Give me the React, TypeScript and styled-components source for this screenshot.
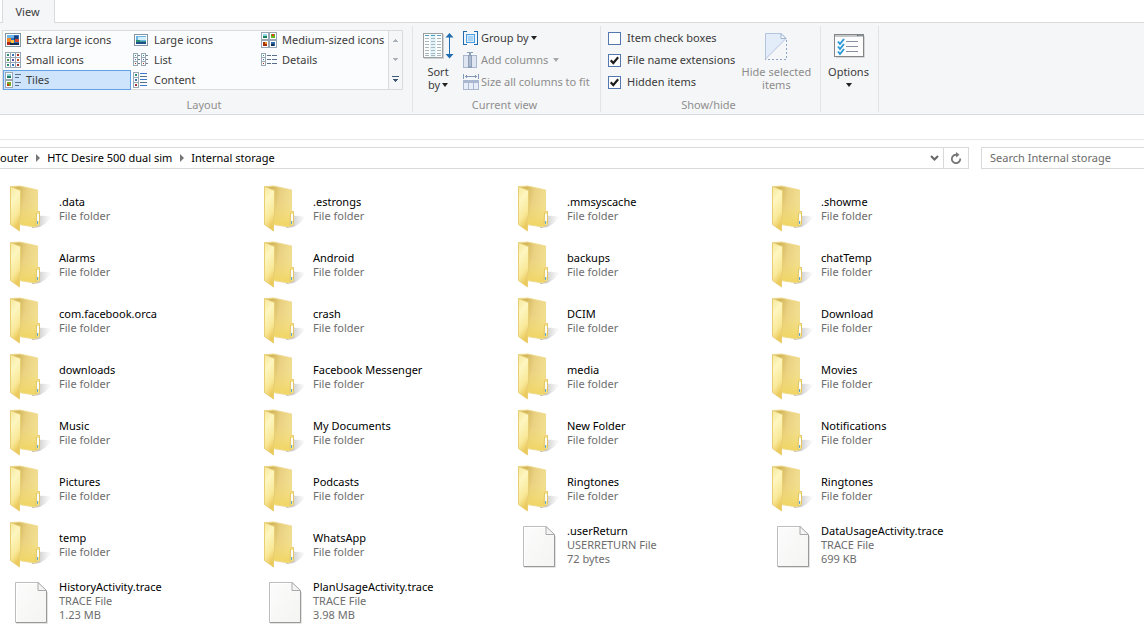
import React, { ReactNode, useState } from "react";
import styled, { createGlobalStyle } from "styled-components";

const GlobalStyle = createGlobalStyle`
  *, *::before, *::after { box-sizing: border-box; }
  body {
    margin: 0;
    background: #fff;
    color: #000;
    font: 11px/14px "Noto Sans", "Open Sans", sans-serif;
  }
  button, input { font: inherit; }
`;

/* ---------- Ribbon ---------- */

const TabStrip = styled.nav`
  display: flex;
  height: 23px;
  padding-left: 2px;
  border-bottom: 1px solid #dadbdc;
`;

const Tab = styled.button`
  height: 23px;
  width: 53px;
  padding: 0 2px 0 0;
  border: solid #dadbdc;
  border-width: 0 1px;
  background: #f5f6f7;
  color: #3b3b3b;
`;

const Ribbon = styled.div`
  display: flex;
  height: 92px;
  padding: 3px 0 2px;
  background: #f5f6f7;
  border-bottom: 1px solid #dadbdc;
`;

const Group = styled.section<{ $width: number }>`
  display: flex;
  flex-direction: column;
  justify-content: space-between;
  flex: none;
  width: ${(p) => p.$width}px;
  border-right: 1px solid #e2e3e4;
`;

const GroupBody = styled.div<{ $left?: number }>`
  display: flex;
  padding-left: ${(p) => p.$left ?? 0}px;
`;

const GroupTitle = styled.h2`
  margin: 0;
  padding-right: 4px;
  font-size: 11px;
  line-height: 14px;
  font-weight: 400;
  text-align: center;
  color: #8f8f8f;
`;

const Gallery = styled.div`
  display: flex;
  width: 401px;
  height: 60px;
  margin: 4px 0 0 2px;
  border: 1px solid #dadbdc;
  background: #fbfcfd;
`;

const GalleryGrid = styled.div`
  flex: 1;
  display: grid;
  grid-template-columns: repeat(3, 128px);
  grid-auto-rows: 20px;
  margin-top: -1px;
`;

const GalleryItem = styled.button<{ $selected?: boolean }>`
  display: flex;
  align-items: center;
  gap: 5px;
  padding: 0 1px;
  border: 1px solid ${(p) => (p.$selected ? "#62a2e4" : "transparent")};
  background: ${(p) => (p.$selected ? "#cde4fc" : "transparent")};
  color: #3b3b3b;
  white-space: nowrap;
`;

const GalleryScroll = styled.div`
  display: flex;
  flex-direction: column;
  width: 14px;
  border-left: 1px solid #dadbdc;
  background: #f5f6f7;
`;

const ScrollButton = styled.button`
  flex: 1;
  display: grid;
  place-items: center;
  padding: 0;
  border: 0;
  background: transparent;
`;

const BigButton = styled.button<{ $width: number; $muted?: boolean }>`
  display: flex;
  flex-direction: column;
  align-items: center;
  gap: 2px;
  flex: none;
  width: ${(p) => p.$width}px;
  padding: 7px 0 0;
  border: 0;
  background: transparent;
  color: ${(p) => (p.$muted ? "#8d8d8d" : "#3b3b3b")};
  line-height: 13px;
`;

const Stack = styled.div<{ $left?: number }>`
  display: flex;
  flex-direction: column;
  padding: 1px 0 0 ${(p) => p.$left ?? 0}px;
`;

const SmallButton = styled.button<{ $muted?: boolean }>`
  display: flex;
  align-items: center;
  gap: 2px;
  height: 22px;
  padding: 0;
  border: 0;
  background: transparent;
  color: ${(p) => (p.$muted ? "#8d8d8d" : "#3b3b3b")};
  white-space: nowrap;
`;

const CheckLabel = styled.label`
  display: flex;
  align-items: center;
  gap: 6px;
  height: 22px;
  color: #3b3b3b;
  white-space: nowrap;
`;

const CheckBox = styled.span`
  display: grid;
  place-items: center;
  > * { grid-area: 1 / 1; }
  > svg { visibility: hidden; pointer-events: none; }
  > input:checked + svg { visibility: visible; }
`;

const CheckInput = styled.input`
  appearance: none;
  width: 13px;
  height: 13px;
  margin: 0;
  border: 1px solid #5577b0;
  background: #fff;
`;

const Caret = styled.span<{ $muted?: boolean }>`
  display: inline-block;
  vertical-align: 2px;
  margin-left: 2px;
  border: solid transparent;
  border-width: 4px 3px 0;
  border-top-color: ${(p) => (p.$muted ? "#a9a9a9" : "#222")};
`;

/* ---------- Address row ---------- */

const AddressRow = styled.div`
  display: flex;
  gap: 12px;
  margin-top: 24px;
  padding-top: 7px;
  border-top: 1px solid #e8e8e8;
`;

const AddressBar = styled.div`
  flex: 1;
  display: flex;
  align-items: center;
  height: 22px;
  border: 1px solid #d9d9d9;
  border-left: 0;
`;

const Crumb = styled.a`
  color: #000;
  text-decoration: none;
  white-space: nowrap;
`;

const CrumbArrow = styled.span`
  margin: 0 7px 0 8px;
  border: solid transparent;
  border-width: 4px 0 4px 4px;
  border-left-color: #777;
`;

const BarButton = styled.button<{ $divided?: boolean }>`
  display: grid;
  place-items: center;
  width: ${(p) => (p.$divided ? 25 : 18)}px;
  height: 20px;
  padding: 0;
  border: 0 solid #d9d9d9;
  border-left-width: ${(p) => (p.$divided ? 1 : 0)}px;
  background: transparent;
`;

const Spacer = styled.span`
  flex: 1;
`;

const Search = styled.input`
  flex: none;
  width: 163px;
  height: 22px;
  padding: 0 8px 2px;
  border: 1px solid #d9d9d9;
  border-right: 0;
  border-radius: 0;
  background: #fff;
  &::placeholder { color: #6a6a6a; opacity: 1; }
`;

/* ---------- Files ---------- */

const FileGrid = styled.ul`
  display: grid;
  grid-template-columns: repeat(auto-fill, 254px);
  grid-auto-rows: 56px;
  margin: 0;
  padding: 12px 0 0 2px;
  list-style: none;
`;

const Tile = styled.li`
  display: flex;
  align-items: center;
  gap: 5px;
  padding-left: 4px;
  white-space: nowrap;
`;

const TileName = styled.div`
  color: #000;
`;

const TileMeta = styled.div`
  color: #6d6d6d;
`;

/* ---------- Icons ---------- */

const Px = ({ children, w = 16, h = 16 }: { children: ReactNode; w?: number; h?: number }) => (
  <svg width={w} height={h} viewBox={`0 0 ${w} ${h}`} shapeRendering="crispEdges" aria-hidden="true">
    {children}
  </svg>
);

const Cell = ({ x, y, s, dot }: { x: number; y: number; s: number; dot: string }) => (
  <g>
    <rect x={x} y={y} width={s} height={s} fill="#9aa7b4" />
    <rect x={x + 1} y={y + 1} width={s - 2} height={s - 2} fill="#fff" />
    <rect x={x + 2} y={y + 2} width={s - 4} height={s - 4} fill={dot} />
  </g>
);

const ExtraLargeIcon = () => (
  <Px>
    <rect x="0" y="1" width="16" height="14" fill="#8495a6" />
    <rect x="1" y="2" width="14" height="12" fill="#fff" />
    <rect x="2" y="3" width="12" height="10" fill="#2f6fbd" />
    <rect x="2" y="3" width="7" height="3" fill="#6db7ee" />
    <rect x="2" y="6" width="4" height="4" fill="#f08a24" />
    <rect x="6" y="8" width="3" height="3" fill="#f7c33c" />
    <rect x="9" y="4" width="4" height="4" fill="#1c3f79" />
    <rect x="10" y="7" width="4" height="3" fill="#d8472b" />
    <rect x="2" y="10" width="3" height="3" fill="#b3261e" />
    <rect x="5" y="11" width="9" height="2" fill="#182b52" />
  </Px>
);

const LargeIcon = () => (
  <Px>
    <rect x="1" y="2" width="14" height="12" fill="#8495a6" />
    <rect x="2" y="3" width="12" height="10" fill="#fff" />
    <rect x="3" y="4" width="10" height="8" fill="#6ab4e8" />
    <rect x="5" y="5" width="8" height="3" fill="#d5effb" />
    <rect x="3" y="8" width="4" height="2" fill="#2b8f72" />
    <rect x="7" y="9" width="6" height="1" fill="#3a9c8b" />
    <rect x="3" y="10" width="10" height="2" fill="#1d4f8b" />
  </Px>
);

const MediumIcon = () => (
  <Px>
    <Cell x={0} y={0} s={8} dot="#8fd6ea" />
    <Cell x={8} y={0} s={8} dot="#68b51e" />
    <Cell x={0} y={8} s={8} dot="#a3310d" />
    <Cell x={8} y={8} s={8} dot="#2c6cab" />
    <rect x="2" y="4" width="4" height="2" fill="#178053" />
    <rect x="11" y="2" width="2" height="2" fill="#e33b21" />
    <rect x="4" y="10" width="2" height="2" fill="#f0932b" />
    <rect x="10" y="12" width="3" height="2" fill="#17304f" />
  </Px>
);

const dots = ["#2b8f72", "#3a70b5", "#b03020", "#3a9a3c", "#5a4a9c", "#c44a1c", "#2b8f72", "#3a70b5", "#a0302a"];

const SmallIcon = () => (
  <Px>
    {dots.map((c, i) => (
      <Cell key={i} x={(i % 3) * 5} y={Math.floor(i / 3) * 5} s={6} dot={c} />
    ))}
  </Px>
);

const ListIcon = () => (
  <Px>
    {[0, 8].map((x) =>
      [1, 5, 9].map((y, i) => (
        <g key={`${x}-${y}`}>
          <rect x={x} y={y} width="5" height="5" fill="#9aa7b4" />
          <rect x={x + 1} y={y + 1} width="3" height="3" fill="#fff" />
          <rect x={x + 2} y={y + 2} width="1" height="1" fill={dots[i]} />
          <rect x={x + 5} y={y + 2} width="2" height="1" fill="#6b7f95" />
        </g>
      ))
    )}
  </Px>
);

const TilesIcon = () => (
  <Px>
    <Cell x={0} y={0} s={8} dot="#8fcde6" />
    <Cell x={0} y={8} s={8} dot="#7aa81e" />
    <rect x="2" y="4" width="4" height="2" fill="#1d7d5f" />
    <rect x="2" y="12" width="2" height="2" fill="#c23a1e" />
    {[2, 10].map((y) => (
      <g key={y} fill="#5a6f8a">
        <rect x="10" y={y} width="6" height="1" />
        <rect x="10" y={y + 3} width="4" height="1" />
      </g>
    ))}
  </Px>
);

const ContentIcon = () => (
  <Px>
    {[0, 5, 10].map((y, i) => (
      <Cell key={y} x={0} y={y} s={6} dot={dots[i + 6]} />
    ))}
    {[1, 4, 7, 10, 13].map((y) => (
      <rect key={y} x="7" y={y} width="7" height="1" fill={y % 2 ? "#3f78c8" : "#5a6f8a"} />
    ))}
  </Px>
);

const DetailsIcon = () => (
  <Px>
    {[1, 5, 9].map((y, i) => (
      <g key={y}>
        <Cell x={0} y={y} s={5} dot={dots[i]} />
        <rect x="6" y={y + 2} width="4" height="1" fill="#5a6f8a" />
        <rect x="11" y={y + 2} width="5" height="1" fill="#5a6f8a" />
      </g>
    ))}
  </Px>
);

const SortIcon = () => (
  <Px w={32} h={30}>
    <rect x="2" y="1" width="20" height="25" fill="#cfd1d3" />
    <rect x="1" y="0" width="20" height="25" fill="#9c9fa2" />
    <rect x="2" y="1" width="18" height="23" fill="#fdfefe" />
    <rect x="8" y="1" width="6" height="23" fill="#e3f4fb" />
    {[2, 5, 8, 11, 14, 17, 20, 22].map((y) => (
      <g key={y} fill={y < 4 ? "#4f9cc6" : "#a9b6be"}>
        <rect x="3" y={y} width="4" height="1" />
        <rect x="9" y={y} width="4" height="1" />
        <rect x="15" y={y} width="4" height="1" />
      </g>
    ))}
    <g fill="#1f6cb0" shapeRendering="auto">
      <rect x="27" y="3" width="1" height="20" />
      <path d="M27.500 0L31.500 4.500H23.500ZM27.500 25.500L31.500 21H23.500Z" />
    </g>
  </Px>
);

const GroupByIcon = () => (
  <Px>
    <path d="M0 1H4V2H1V14H4V15H0ZM15 1H11V2H14V14H11V15H15Z" fill="#1f6cb0" />
    <rect x="3" y="4" width="9" height="9" fill="#4aa0e6" />
    <rect x="4" y="5" width="7" height="7" fill="#d5ebfb" />
    <rect x="5" y="6" width="5" height="5" fill="#a9d4f6" />
  </Px>
);

const AddColumnsIcon = () => (
  <Px>
    <rect x="0" y="3" width="14" height="13" fill="#a9b8d0" />
    <rect x="1" y="4" width="12" height="11" fill="#dfe6f1" />
    <rect x="5" y="3" width="4" height="13" fill="#8e9fb8" />
    <rect x="6" y="4" width="2" height="10" fill="#aebbd0" />
    <path d="M4 0H10V1H8V3H6V1H4Z" fill="#8e9fb8" />
  </Px>
);

const SizeColumnsIcon = () => (
  <Px>
    <path d="M0 0H1V5H0ZM15 0H16V5H15ZM2 2H14V3H2ZM3 1H4V4H3ZM12 1H13V4H12Z" fill="#8396b5" />
    <rect x="0" y="6" width="16" height="10" fill="#a9b8d0" />
    <rect x="1" y="9" width="4" height="6" fill="#e8eef7" />
    <rect x="6" y="9" width="4" height="6" fill="#e8eef7" />
    <rect x="11" y="9" width="4" height="6" fill="#e8eef7" />
  </Px>
);

const HideIcon = () => (
  <svg width="24" height="30" viewBox="0 0 24 30" aria-hidden="true">
    <path d="M1.500 0.500H17L22 5.500L1.500 26Z" fill="#e3edfa" stroke="#b3c5de" />
    <path d="M17 0.500V5.500H22Z" fill="#f6f9fd" stroke="#9fb2cf" />
    <path d="M22.500 7V26.500H1" fill="none" stroke="#8fa5c8" strokeDasharray="2 2" />
  </svg>
);

const OptionsIcon = () => (
  <svg width="32" height="30" viewBox="0 0 32 30" aria-hidden="true">
    <path d="M3 24.500H31.500V3" fill="none" stroke="#d5d6d7" />
    <rect x="1.500" y="1.500" width="29" height="22" fill="#fcfcfc" stroke="#858585" />
    <rect x="2" y="2" width="28" height="2" fill="#c3c7ca" />
    <path d="M24 2.500H25.500M26.500 2.500H27.500M28.500 2.500H29.500" stroke="#4e6573" />
    <path d="M13 8.500H25M13 13.500H25M13 18.500H25" stroke="#8b8fa3" />
    <path d="M5 8.500L7 11L11 6M5 13.500L7 16L11 11M5 18.500L7 21L11 16" fill="none" stroke="#2f9bd6" strokeWidth="2" />
  </svg>
);

const FolderIcon = () => (
  <svg width="48" height="48" viewBox="0 0 48 48" aria-hidden="true">
    <defs>
      <linearGradient id="folderFront" x1="0" y1="0" x2="0.300" y2="1">
        <stop offset="0" stopColor="#f7e79c" />
        <stop offset="0.350" stopColor="#fdf6c0" />
        <stop offset="0.750" stopColor="#f9e898" />
        <stop offset="1" stopColor="#ecca5c" />
      </linearGradient>
      <linearGradient id="folderBack" x1="0" y1="0" x2="1" y2="0.300">
        <stop offset="0.250" stopColor="#d2b65c" />
        <stop offset="0.550" stopColor="#ead182" />
        <stop offset="1" stopColor="#f3e092" />
      </linearGradient>
      <linearGradient id="folderGlow" x1="0" y1="0" x2="0" y2="1">
        <stop offset="0.400" stopColor="#f3dc74" stopOpacity="0" />
        <stop offset="1" stopColor="#f0d562" />
      </linearGradient>
      <linearGradient id="folderShadow" x1="0" y1="0" x2="1" y2="0">
        <stop offset="0" stopColor="#777" stopOpacity="0.600" />
        <stop offset="1" stopColor="#aaa" stopOpacity="0" />
      </linearGradient>
    </defs>
    <path d="M30 31Q38 30 46 32Q41 38 34 42L26 43Z" fill="url(#folderShadow)" />
    <path d="M5 1.500L14 1L31.500 5V27L33 29V39L29 42L13 39.500Z" fill="url(#folderBack)" />
    <path d="M5 1.500L14 1L31.500 5V27L33 29V39L29 42L13 39.500Z" fill="url(#folderGlow)" stroke="#f0dc90" strokeWidth="1" />
    <path d="M30.500 28L32 26.500H33.500V39L31.500 41L30 40Z" fill="#fbe98f" stroke="#e3c565" strokeWidth="1" />
    <rect x="31" y="29" width="2" height="7" fill="#fff" />
    <rect x="31" y="36" width="1" height="3" fill="#5aa6dc" />
    <path d="M4.500 1.500L14.500 5.500V30.500L13.500 32V46L4.500 39.500Z" fill="url(#folderFront)" />
    <path d="M4.500 39.500V1.500L14.500 5.500V30.500L13.500 32V46Z" fill="none" stroke="#e8cf74" strokeWidth="1" />
  </svg>
);

const DocumentIcon = () => (
  <svg width="48" height="48" viewBox="0 0 48 48" aria-hidden="true">
    <defs>
      <linearGradient id="page" x1="0" y1="0" x2="1" y2="1">
        <stop offset="0" stopColor="#fcfcfc" />
        <stop offset="1" stopColor="#f4f4f3" />
      </linearGradient>
    </defs>
    <path d="M10 46.500H41.500V15" fill="none" stroke="#e4e4e4" />
    <path d="M9.500 5.500H32L40.500 14V45.500H9.500Z" fill="url(#page)" stroke="#bdbdbd" />
    <path d="M10 45.500H40.500V14" fill="none" stroke="#999" />
    <path d="M10.500 44.500V6.500H31" fill="none" stroke="#fff" />
    <path d="M32 5.500V13.500H40.500Z" fill="#f4f4f4" stroke="#a9a9a9" />
  </svg>
);

/* ---------- Data ---------- */

const views = [
  { name: "Extra large icons", Icon: ExtraLargeIcon },
  { name: "Large icons", Icon: LargeIcon },
  { name: "Medium-sized icons", Icon: MediumIcon },
  { name: "Small icons", Icon: SmallIcon },
  { name: "List", Icon: ListIcon },
  { name: "Details", Icon: DetailsIcon },
  { name: "Tiles", Icon: TilesIcon },
  { name: "Content", Icon: ContentIcon },
];

const toggles = [
  { name: "Item check boxes", on: false },
  { name: "File name extensions", on: true },
  { name: "Hidden items", on: true },
];

const folders = [
  ".data", ".estrongs", ".mmsyscache", ".showme",
  "Alarms", "Android", "backups", "chatTemp",
  "com.facebook.orca", "crash", "DCIM", "Download",
  "downloads", "Facebook Messenger", "media", "Movies",
  "Music", "My Documents", "New Folder", "Notifications",
  "Pictures", "Podcasts", "Ringtones", "Ringtones",
  "temp", "WhatsApp",
];

const files = [
  { name: ".userReturn", type: "USERRETURN File", size: "72 bytes" },
  { name: "DataUsageActivity.trace", type: "TRACE File", size: "699 KB" },
  { name: "HistoryActivity.trace", type: "TRACE File", size: "1.23 MB" },
  { name: "PlanUsageActivity.trace", type: "TRACE File", size: "3.98 MB" },
];

export default function App() {
  const [view, setView] = useState("Tiles");
  return (
    <>
      <GlobalStyle />
      <TabStrip>
        <Tab>View</Tab>
      </TabStrip>
      <Ribbon>
        <Group $width={413}>
          <Gallery>
            <GalleryGrid>
              {views.map(({ name, Icon }) => (
                <GalleryItem key={name} $selected={view === name} onClick={() => setView(name)}>
                  <Icon />
                  {name}
                </GalleryItem>
              ))}
            </GalleryGrid>
            <GalleryScroll>
              <ScrollButton aria-label="Scroll up">
                <Px w={5} h={3}><path d="M2 0H3V1H4V2H5V3H0V2H1V1H2Z" fill="#a9b0b8" /></Px>
              </ScrollButton>
              <ScrollButton aria-label="Scroll down">
                <Px w={5} h={3}><path d="M0 0H5V1H4V2H3V3H2V2H1V1H0Z" fill="#a9b0b8" /></Px>
              </ScrollButton>
              <ScrollButton aria-label="More layouts">
                <Px w={7} h={6}><path d="M0 0H7V1H0ZM1 3H6V4H5V5H4V6H3V5H2V4H1Z" fill="#3f5878" /></Px>
              </ScrollButton>
            </GalleryScroll>
          </Gallery>
          <GroupTitle>Layout</GroupTitle>
        </Group>

        <Group $width={188}>
          <GroupBody $left={2}>
            <BigButton $width={46}>
              <SortIcon />
              <span>Sort<br />by<Caret /></span>
            </BigButton>
            <Stack $left={2}>
              <SmallButton><GroupByIcon /><span>Group by<Caret /></span></SmallButton>
              <SmallButton $muted><AddColumnsIcon /><span>Add columns <Caret $muted /></span></SmallButton>
              <SmallButton $muted><SizeColumnsIcon />Size all columns to fit</SmallButton>
            </Stack>
          </GroupBody>
          <GroupTitle>Current view</GroupTitle>
        </Group>

        <Group $width={220}>
          <GroupBody $left={7}>
            <Stack>
              {toggles.map((t) => (
                <CheckLabel key={t.name}>
                  <CheckBox>
                    <CheckInput type="checkbox" defaultChecked={t.on} />
                    <svg width="9" height="9" viewBox="0 0 9 9" aria-hidden="true">
                      <path d="M0.700 4.300L3.300 7L8.200 1.300" fill="none" stroke="#1e1e1e" strokeWidth="2.200" />
                    </svg>
                  </CheckBox>
                  {t.name}
                </CheckLabel>
              ))}
            </Stack>
            <BigButton $width={82} $muted>
              <HideIcon />
              <span>Hide selected<br />items</span>
            </BigButton>
          </GroupBody>
          <GroupTitle>Show/hide</GroupTitle>
        </Group>

        <Group $width={58}>
          <BigButton $width={55}>
            <OptionsIcon />
            <span>Options<br /><Caret /></span>
          </BigButton>
        </Group>
      </Ribbon>

      <AddressRow>
        <AddressBar>
          <Crumb href="#computer">outer</Crumb>
          <CrumbArrow />
          <Crumb href="#device">HTC Desire 500 dual sim</Crumb>
          <CrumbArrow />
          <Crumb href="#storage">Internal storage</Crumb>
          <Spacer />
          <BarButton aria-label="Previous locations">
            <svg width="9" height="8" viewBox="0 0 9 8" aria-hidden="true">
              <path d="M1 2L4.500 5.500L8 2" fill="none" stroke="#666" strokeWidth="2" />
            </svg>
          </BarButton>
          <BarButton $divided aria-label="Refresh">
            <svg width="12" height="12" viewBox="0 0 12 12" aria-hidden="true">
              <path d="M10.200 6.500A4.200 4.200 0 1 1 6.500 2.800" fill="none" stroke="#777" strokeWidth="1.800" />
              <path d="M6 0V5.500L9.500 2.800Z" fill="#777" />
            </svg>
          </BarButton>
        </AddressBar>
        <Search aria-label="Search" placeholder="Search Internal storage" />
      </AddressRow>

      <FileGrid>
        {folders.map((name, i) => (
          <Tile key={i}>
            <FolderIcon />
            <div>
              <TileName>{name}</TileName>
              <TileMeta>File folder</TileMeta>
            </div>
          </Tile>
        ))}
        {files.map((f) => (
          <Tile key={f.name}>
            <DocumentIcon />
            <div>
              <TileName>{f.name}</TileName>
              <TileMeta>{f.type}</TileMeta>
              <TileMeta>{f.size}</TileMeta>
            </div>
          </Tile>
        ))}
      </FileGrid>
    </>
  );
}
